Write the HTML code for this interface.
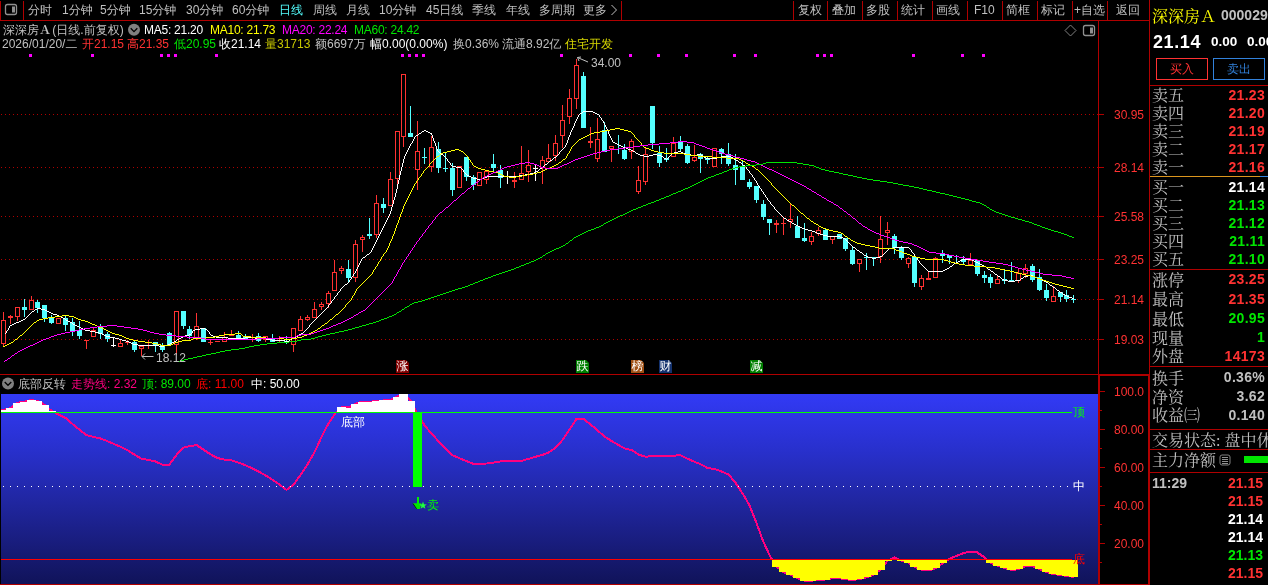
<!DOCTYPE html>
<html lang="zh-CN"><head><meta charset="utf-8"><title>深深房A 日线</title>
<style>
html,body{margin:0;padding:0;background:#000;}
body{width:1268px;height:585px;position:relative;overflow:hidden;font-family:"Liberation Sans","WenQuanYi Zen Hei","Noto Sans CJK SC",sans-serif;color:#C0C0C0;}
svg{position:absolute;left:0;top:0;}
#txt{position:absolute;left:0;top:0;width:1268px;height:585px;will-change:transform;}
.t{position:absolute;white-space:nowrap;}
.tb{line-height:12px;font-size:12px;color:#C0C0C0;}
.h{line-height:12px;font-size:12px;color:#C0C0C0;}
.sa{font-family:"Noto Serif CJK SC",serif;font-weight:bold;font-size:12px;}
.sa2{font-family:"Noto Serif CJK SC",serif;font-size:16px;}
.big{line-height:16px;margin-top:1px;font-family:"Liberation Serif","Noto Serif CJK SC",serif;font-size:16px;color:#C0C0C0;font-weight:400;}
.par{letter-spacing:-4px;margin-left:-4px;}
.code{line-height:14px;font-size:14px;font-weight:bold;color:#C0C0C0;}
.price{line-height:18px;font-size:18px;font-weight:bold;color:#fff;letter-spacing:0.6px;}
.chg{line-height:14px;font-size:13.5px;font-weight:bold;color:#fff;}
.val{line-height:14px;font-size:14px;font-weight:bold;}
.btn{position:absolute;height:22px;border:1px solid;box-sizing:border-box;width:52px;text-align:center;font-size:12px;line-height:20px;}
.mk{clip-path:polygon(0 0,10px 0,13px 3px,13px 13px,0 13px);position:absolute;width:13px;height:13px;color:#fff;font-size:12px;line-height:13px;text-align:center;overflow:hidden;}
</style></head><body>
<svg width="1268" height="585" viewBox="0 0 1268 585" shape-rendering="crispEdges">
<defs><linearGradient id="bg" x1="0" y1="0" x2="0" y2="1"><stop offset="0" stop-color="#323AF5"/><stop offset="0.3" stop-color="#2830CC"/><stop offset="0.57" stop-color="#2026A0"/><stop offset="0.96" stop-color="#121560"/><stop offset="1" stop-color="#10135A"/></linearGradient></defs>
<rect x="1" y="394" width="1097" height="190" fill="url(#bg)" />
<rect x="0" y="20" width="1150" height="1" fill="#B00000" />
<rect x="0" y="1" width="1" height="20" fill="#B00000" />
<rect x="23" y="1" width="1" height="20" fill="#B00000" />
<rect x="621" y="1" width="1" height="20" fill="#B00000" />
<rect x="793" y="1" width="1" height="20" fill="#B00000" />
<rect x="827" y="1" width="1" height="20" fill="#B00000" />
<rect x="862" y="1" width="1" height="20" fill="#B00000" />
<rect x="897" y="1" width="1" height="20" fill="#B00000" />
<rect x="932" y="1" width="1" height="20" fill="#B00000" />
<rect x="967" y="1" width="1" height="20" fill="#B00000" />
<rect x="1002" y="1" width="1" height="20" fill="#B00000" />
<rect x="1037" y="1" width="1" height="20" fill="#B00000" />
<rect x="1072" y="1" width="1" height="20" fill="#B00000" />
<rect x="1107" y="1" width="1" height="20" fill="#B00000" />
<rect x="1098" y="21" width="1" height="564" fill="#B00000" />
<rect x="1149" y="0" width="1" height="585" fill="#B00000" />
<rect x="0" y="374" width="1098" height="1" fill="#B00000" />
<rect x="1098" y="374" width="52" height="2" fill="#B00000" />
<rect x="1099" y="374" width="1" height="211" fill="#B00000" />
<rect x="1148" y="374" width="1" height="211" fill="#B00000" />
<rect x="0" y="584" width="1150" height="1" fill="#B00000" />
<line x1="1" y1="114.5" x2="1098" y2="114.5" stroke="#B00000" stroke-width="1" stroke-dasharray="1 3"/>
<rect x="1099" y="114" width="5" height="1" fill="#B00000" />
<line x1="1" y1="167.5" x2="1098" y2="167.5" stroke="#B00000" stroke-width="1" stroke-dasharray="1 3"/>
<rect x="1099" y="167" width="5" height="1" fill="#B00000" />
<line x1="1" y1="216.5" x2="1098" y2="216.5" stroke="#B00000" stroke-width="1" stroke-dasharray="1 3"/>
<rect x="1099" y="216" width="5" height="1" fill="#B00000" />
<line x1="1" y1="259.5" x2="1098" y2="259.5" stroke="#B00000" stroke-width="1" stroke-dasharray="1 3"/>
<rect x="1099" y="259" width="5" height="1" fill="#B00000" />
<line x1="1" y1="299.5" x2="1098" y2="299.5" stroke="#B00000" stroke-width="1" stroke-dasharray="1 3"/>
<rect x="1099" y="299" width="5" height="1" fill="#B00000" />
<line x1="1" y1="339.5" x2="1098" y2="339.5" stroke="#B00000" stroke-width="1" stroke-dasharray="1 3"/>
<rect x="1099" y="339" width="5" height="1" fill="#B00000" />
<rect x="29" y="54" width="3" height="3" fill="#FF00FF" />
<rect x="91" y="54" width="3" height="3" fill="#FF00FF" />
<rect x="160" y="54" width="3" height="3" fill="#FF00FF" />
<rect x="167" y="54" width="3" height="3" fill="#FF00FF" />
<rect x="174" y="54" width="3" height="3" fill="#FF00FF" />
<rect x="215" y="54" width="3" height="3" fill="#FF00FF" />
<rect x="401" y="54" width="3" height="3" fill="#FF00FF" />
<rect x="408" y="54" width="3" height="3" fill="#FF00FF" />
<rect x="415" y="54" width="3" height="3" fill="#FF00FF" />
<rect x="422" y="54" width="3" height="3" fill="#FF00FF" />
<rect x="560" y="54" width="3" height="3" fill="#FF00FF" />
<rect x="629" y="54" width="3" height="3" fill="#FF00FF" />
<rect x="657" y="54" width="3" height="3" fill="#FF00FF" />
<rect x="685" y="54" width="3" height="3" fill="#FF00FF" />
<rect x="733" y="54" width="3" height="3" fill="#FF00FF" />
<rect x="754" y="54" width="3" height="3" fill="#FF00FF" />
<rect x="816" y="54" width="3" height="3" fill="#FF00FF" />
<rect x="823" y="54" width="3" height="3" fill="#FF00FF" />
<rect x="830" y="54" width="3" height="3" fill="#FF00FF" />
<rect x="912" y="54" width="3" height="3" fill="#FF00FF" />
<rect x="961" y="54" width="3" height="3" fill="#FF00FF" />
<rect x="982" y="54" width="3" height="3" fill="#FF00FF" />
<rect x="3" y="312" width="1" height="8" fill="#FF3232" />
<rect x="3" y="344" width="1" height="3" fill="#FF3232" />
<rect x="1.5" y="320.5" width="4" height="23" fill="#000" stroke="#FF3232" stroke-width="1"/>
<rect x="10" y="315" width="1" height="9" fill="#FF3232" />
<rect x="8" y="316" width="5" height="2" fill="#FF3232" />
<rect x="17" y="317" width="1" height="4" fill="#FF3232" />
<rect x="15.5" y="307.5" width="4" height="9" fill="#000" stroke="#FF3232" stroke-width="1"/>
<rect x="24" y="299" width="1" height="18" fill="#54FFFF" />
<rect x="22" y="307" width="5" height="3" fill="#54FFFF" />
<rect x="31" y="296" width="1" height="4" fill="#FF3232" />
<rect x="29.5" y="300.5" width="4" height="9" fill="#000" stroke="#FF3232" stroke-width="1"/>
<rect x="37" y="300" width="1" height="13" fill="#54FFFF" />
<rect x="35" y="302" width="5" height="6" fill="#54FFFF" />
<rect x="44" y="305" width="1" height="17" fill="#54FFFF" />
<rect x="42" y="305" width="5" height="13" fill="#54FFFF" />
<rect x="51" y="315" width="1" height="9" fill="#54FFFF" />
<rect x="49" y="318" width="5" height="5" fill="#54FFFF" />
<rect x="56.5" y="318.5" width="4" height="5" fill="#000" stroke="#FF3232" stroke-width="1"/>
<rect x="65" y="316" width="1" height="15" fill="#54FFFF" />
<rect x="63" y="318" width="5" height="7" fill="#54FFFF" />
<rect x="72" y="318" width="1" height="18" fill="#54FFFF" />
<rect x="70" y="322" width="5" height="10" fill="#54FFFF" />
<rect x="79" y="321" width="1" height="18" fill="#54FFFF" />
<rect x="77" y="330" width="5" height="6" fill="#54FFFF" />
<rect x="86" y="340" width="1" height="9" fill="#FF3232" />
<rect x="84" y="340" width="5" height="1" fill="#FF3232" />
<rect x="93" y="328" width="1" height="2" fill="#FF3232" />
<rect x="91.5" y="330.5" width="4" height="6" fill="#000" stroke="#FF3232" stroke-width="1"/>
<rect x="100" y="324" width="1" height="15" fill="#54FFFF" />
<rect x="98" y="327" width="5" height="7" fill="#54FFFF" />
<rect x="107" y="332" width="1" height="10" fill="#54FFFF" />
<rect x="105" y="334" width="5" height="5" fill="#54FFFF" />
<rect x="113" y="338" width="1" height="9" fill="#FFFFFF" />
<rect x="111" y="345" width="5" height="1" fill="#FFFFFF" />
<rect x="120" y="339" width="1" height="4" fill="#FF3232" />
<rect x="118.5" y="343.5" width="4" height="3" fill="#000" stroke="#FF3232" stroke-width="1"/>
<rect x="127" y="340" width="1" height="5" fill="#FF3232" />
<rect x="125" y="342" width="5" height="1" fill="#FF3232" />
<rect x="134" y="341" width="1" height="11" fill="#54FFFF" />
<rect x="132" y="342" width="5" height="8" fill="#54FFFF" />
<rect x="141" y="349" width="1" height="7" fill="#FF3232" />
<rect x="139.5" y="346.5" width="4" height="2" fill="#000" stroke="#FF3232" stroke-width="1"/>
<rect x="148" y="340" width="1" height="9" fill="#FF3232" />
<rect x="146" y="345" width="5" height="1" fill="#FF3232" />
<rect x="155" y="342" width="1" height="10" fill="#54FFFF" />
<rect x="153" y="342" width="5" height="4" fill="#54FFFF" />
<rect x="162" y="343" width="1" height="9" fill="#54FFFF" />
<rect x="160" y="345" width="5" height="5" fill="#54FFFF" />
<rect x="169" y="332" width="1" height="13" fill="#54FFFF" />
<rect x="167" y="333" width="5" height="12" fill="#54FFFF" />
<rect x="176" y="345" width="1" height="10" fill="#FF3232" />
<rect x="174.5" y="311.5" width="4" height="33" fill="#000" stroke="#FF3232" stroke-width="1"/>
<rect x="183" y="311" width="1" height="18" fill="#54FFFF" />
<rect x="181" y="311" width="5" height="15" fill="#54FFFF" />
<rect x="189" y="326" width="1" height="13" fill="#54FFFF" />
<rect x="187" y="329" width="5" height="7" fill="#54FFFF" />
<rect x="196" y="313" width="1" height="13" fill="#FF3232" />
<rect x="196" y="338" width="1" height="2" fill="#FF3232" />
<rect x="194.5" y="326.5" width="4" height="11" fill="#000" stroke="#FF3232" stroke-width="1"/>
<rect x="203" y="328" width="1" height="14" fill="#54FFFF" />
<rect x="201" y="328" width="5" height="14" fill="#54FFFF" />
<rect x="210" y="340" width="1" height="5" fill="#FF3232" />
<rect x="208" y="342" width="5" height="1" fill="#FF3232" />
<rect x="217" y="341" width="1" height="1" fill="#FF3232" />
<rect x="215" y="341" width="5" height="1" fill="#FF3232" />
<rect x="224" y="332" width="1" height="5" fill="#FF3232" />
<rect x="222.5" y="337.5" width="4" height="4" fill="#000" stroke="#FF3232" stroke-width="1"/>
<rect x="231" y="330" width="1" height="6" fill="#FF3232" />
<rect x="229" y="335" width="5" height="1" fill="#FF3232" />
<rect x="238" y="331" width="1" height="9" fill="#54FFFF" />
<rect x="236" y="335" width="5" height="4" fill="#54FFFF" />
<rect x="245" y="334" width="1" height="5" fill="#54FFFF" />
<rect x="243" y="337" width="5" height="2" fill="#54FFFF" />
<rect x="252" y="334" width="1" height="8" fill="#FF3232" />
<rect x="250" y="337" width="5" height="1" fill="#FF3232" />
<rect x="258" y="333" width="1" height="9" fill="#54FFFF" />
<rect x="256" y="336" width="5" height="5" fill="#54FFFF" />
<rect x="265" y="340" width="1" height="2" fill="#FF3232" />
<rect x="263.5" y="336.5" width="4" height="3" fill="#000" stroke="#FF3232" stroke-width="1"/>
<rect x="272" y="334" width="1" height="8" fill="#54FFFF" />
<rect x="270" y="338" width="5" height="4" fill="#54FFFF" />
<rect x="279" y="336" width="1" height="7" fill="#FF3232" />
<rect x="277" y="342" width="5" height="1" fill="#FF3232" />
<rect x="286" y="336" width="1" height="8" fill="#54FFFF" />
<rect x="284" y="341" width="5" height="1" fill="#54FFFF" />
<rect x="293" y="345" width="1" height="7" fill="#FF3232" />
<rect x="291.5" y="328.5" width="4" height="16" fill="#000" stroke="#FF3232" stroke-width="1"/>
<rect x="300" y="316" width="1" height="3" fill="#FF3232" />
<rect x="298.5" y="319.5" width="4" height="11" fill="#000" stroke="#FF3232" stroke-width="1"/>
<rect x="307" y="315" width="1" height="2" fill="#FF3232" />
<rect x="307" y="320" width="1" height="1" fill="#FF3232" />
<rect x="305.5" y="317.5" width="4" height="2" fill="#000" stroke="#FF3232" stroke-width="1"/>
<rect x="314" y="302" width="1" height="7" fill="#FF3232" />
<rect x="312.5" y="309.5" width="4" height="8" fill="#000" stroke="#FF3232" stroke-width="1"/>
<rect x="321" y="302" width="1" height="2" fill="#FF3232" />
<rect x="321" y="307" width="1" height="3" fill="#FF3232" />
<rect x="319.5" y="304.5" width="4" height="2" fill="#000" stroke="#FF3232" stroke-width="1"/>
<rect x="328" y="291" width="1" height="2" fill="#FF3232" />
<rect x="328" y="304" width="1" height="4" fill="#FF3232" />
<rect x="326.5" y="293.5" width="4" height="10" fill="#000" stroke="#FF3232" stroke-width="1"/>
<rect x="334" y="260" width="1" height="12" fill="#FF3232" />
<rect x="332.5" y="272.5" width="4" height="18" fill="#000" stroke="#FF3232" stroke-width="1"/>
<rect x="341" y="266" width="1" height="2" fill="#FF3232" />
<rect x="341" y="271" width="1" height="3" fill="#FF3232" />
<rect x="339.5" y="268.5" width="4" height="2" fill="#000" stroke="#FF3232" stroke-width="1"/>
<rect x="348" y="260" width="1" height="23" fill="#54FFFF" />
<rect x="346" y="269" width="5" height="9" fill="#54FFFF" />
<rect x="355" y="240" width="1" height="4" fill="#FF3232" />
<rect x="355" y="278" width="1" height="4" fill="#FF3232" />
<rect x="353.5" y="244.5" width="4" height="33" fill="#000" stroke="#FF3232" stroke-width="1"/>
<rect x="362" y="235" width="1" height="2" fill="#FF3232" />
<rect x="362" y="240" width="1" height="12" fill="#FF3232" />
<rect x="360.5" y="237.5" width="4" height="2" fill="#000" stroke="#FF3232" stroke-width="1"/>
<rect x="369" y="218" width="1" height="21" fill="#54FFFF" />
<rect x="367" y="234" width="5" height="2" fill="#54FFFF" />
<rect x="376" y="195" width="1" height="8" fill="#FF3232" />
<rect x="376" y="235" width="1" height="3" fill="#FF3232" />
<rect x="374.5" y="203.5" width="4" height="31" fill="#000" stroke="#FF3232" stroke-width="1"/>
<rect x="383" y="198" width="1" height="15" fill="#54FFFF" />
<rect x="381" y="204" width="5" height="4" fill="#54FFFF" />
<rect x="390" y="172" width="1" height="7" fill="#FF3232" />
<rect x="388.5" y="179.5" width="4" height="26" fill="#000" stroke="#FF3232" stroke-width="1"/>
<rect x="397" y="179" width="1" height="9" fill="#FF3232" />
<rect x="395.5" y="131.5" width="4" height="47" fill="#000" stroke="#FF3232" stroke-width="1"/>
<rect x="403" y="137" width="1" height="10" fill="#FF3232" />
<rect x="401.5" y="74.5" width="4" height="62" fill="#000" stroke="#FF3232" stroke-width="1"/>
<rect x="410" y="106" width="1" height="31" fill="#54FFFF" />
<rect x="408" y="133" width="5" height="4" fill="#54FFFF" />
<rect x="417" y="121" width="1" height="30" fill="#FF3232" />
<rect x="417" y="170" width="1" height="20" fill="#FF3232" />
<rect x="415.5" y="151.5" width="4" height="18" fill="#000" stroke="#FF3232" stroke-width="1"/>
<rect x="424" y="148" width="1" height="16" fill="#54FFFF" />
<rect x="422" y="157" width="5" height="1" fill="#54FFFF" />
<rect x="431" y="136" width="1" height="11" fill="#FF3232" />
<rect x="431" y="167" width="1" height="5" fill="#FF3232" />
<rect x="429.5" y="147.5" width="4" height="19" fill="#000" stroke="#FF3232" stroke-width="1"/>
<rect x="438" y="142" width="1" height="31" fill="#54FFFF" />
<rect x="436" y="149" width="5" height="19" fill="#54FFFF" />
<rect x="445" y="152" width="1" height="20" fill="#54FFFF" />
<rect x="443" y="168" width="5" height="1" fill="#54FFFF" />
<rect x="452" y="163" width="1" height="33" fill="#54FFFF" />
<rect x="450" y="168" width="5" height="22" fill="#54FFFF" />
<rect x="457.5" y="166.5" width="4" height="21" fill="#000" stroke="#FF3232" stroke-width="1"/>
<rect x="466" y="157" width="1" height="24" fill="#54FFFF" />
<rect x="464" y="157" width="5" height="20" fill="#54FFFF" />
<rect x="473" y="175" width="1" height="15" fill="#54FFFF" />
<rect x="471" y="177" width="5" height="8" fill="#54FFFF" />
<rect x="477.5" y="172.5" width="4" height="13" fill="#000" stroke="#FF3232" stroke-width="1"/>
<rect x="486" y="180" width="1" height="4" fill="#FF3232" />
<rect x="484.5" y="171.5" width="4" height="8" fill="#000" stroke="#FF3232" stroke-width="1"/>
<rect x="493" y="154" width="1" height="18" fill="#54FFFF" />
<rect x="491" y="164" width="5" height="4" fill="#54FFFF" />
<rect x="500" y="165" width="1" height="23" fill="#54FFFF" />
<rect x="498" y="170" width="5" height="8" fill="#54FFFF" />
<rect x="507" y="171" width="1" height="13" fill="#FFFFFF" />
<rect x="505" y="176" width="5" height="1" fill="#FFFFFF" />
<rect x="514" y="172" width="1" height="16" fill="#FF3232" />
<rect x="512" y="180" width="5" height="2" fill="#FF3232" />
<rect x="521" y="146" width="1" height="27" fill="#FF3232" />
<rect x="519.5" y="173.5" width="4" height="6" fill="#000" stroke="#FF3232" stroke-width="1"/>
<rect x="528" y="150" width="1" height="15" fill="#FF3232" />
<rect x="528" y="172" width="1" height="10" fill="#FF3232" />
<rect x="526.5" y="165.5" width="4" height="6" fill="#000" stroke="#FF3232" stroke-width="1"/>
<rect x="535" y="165" width="1" height="16" fill="#FFFFFF" />
<rect x="533" y="168" width="5" height="1" fill="#FFFFFF" />
<rect x="542" y="156" width="1" height="4" fill="#FF3232" />
<rect x="542" y="168" width="1" height="16" fill="#FF3232" />
<rect x="540.5" y="160.5" width="4" height="7" fill="#000" stroke="#FF3232" stroke-width="1"/>
<rect x="548" y="144" width="1" height="14" fill="#FF3232" />
<rect x="548" y="162" width="1" height="1" fill="#FF3232" />
<rect x="546.5" y="158.5" width="4" height="3" fill="#000" stroke="#FF3232" stroke-width="1"/>
<rect x="555" y="135" width="1" height="8" fill="#FF3232" />
<rect x="555" y="156" width="1" height="5" fill="#FF3232" />
<rect x="553.5" y="143.5" width="4" height="12" fill="#000" stroke="#FF3232" stroke-width="1"/>
<rect x="562" y="105" width="1" height="15" fill="#FF3232" />
<rect x="562" y="136" width="1" height="12" fill="#FF3232" />
<rect x="560.5" y="120.5" width="4" height="15" fill="#000" stroke="#FF3232" stroke-width="1"/>
<rect x="569" y="89" width="1" height="9" fill="#FF3232" />
<rect x="569" y="117" width="1" height="7" fill="#FF3232" />
<rect x="567.5" y="98.5" width="4" height="18" fill="#000" stroke="#FF3232" stroke-width="1"/>
<rect x="576" y="59" width="1" height="6" fill="#FF3232" />
<rect x="576" y="99" width="1" height="10" fill="#FF3232" />
<rect x="574.5" y="65.5" width="4" height="33" fill="#000" stroke="#FF3232" stroke-width="1"/>
<rect x="583" y="72" width="1" height="56" fill="#54FFFF" />
<rect x="581" y="76" width="5" height="52" fill="#54FFFF" />
<rect x="590" y="127" width="1" height="21" fill="#FF3232" />
<rect x="588" y="141" width="5" height="2" fill="#FF3232" />
<rect x="597" y="118" width="1" height="21" fill="#FF3232" />
<rect x="597" y="159" width="1" height="3" fill="#FF3232" />
<rect x="595.5" y="139.5" width="4" height="19" fill="#000" stroke="#FF3232" stroke-width="1"/>
<rect x="604" y="122" width="1" height="30" fill="#54FFFF" />
<rect x="602" y="130" width="5" height="22" fill="#54FFFF" />
<rect x="611" y="149" width="1" height="13" fill="#FF3232" />
<rect x="609.5" y="146.5" width="4" height="2" fill="#000" stroke="#FF3232" stroke-width="1"/>
<rect x="618" y="135" width="1" height="19" fill="#54FFFF" />
<rect x="624" y="144" width="1" height="16" fill="#54FFFF" />
<rect x="622" y="150" width="5" height="9" fill="#54FFFF" />
<rect x="631" y="139" width="1" height="2" fill="#FF3232" />
<rect x="631" y="152" width="1" height="7" fill="#FF3232" />
<rect x="629.5" y="141.5" width="4" height="10" fill="#000" stroke="#FF3232" stroke-width="1"/>
<rect x="638" y="166" width="1" height="14" fill="#FF3232" />
<rect x="638" y="192" width="1" height="2" fill="#FF3232" />
<rect x="636.5" y="180.5" width="4" height="11" fill="#000" stroke="#FF3232" stroke-width="1"/>
<rect x="645" y="148" width="1" height="6" fill="#FF3232" />
<rect x="645" y="182" width="1" height="3" fill="#FF3232" />
<rect x="643.5" y="154.5" width="4" height="27" fill="#000" stroke="#FF3232" stroke-width="1"/>
<rect x="652" y="106" width="1" height="43" fill="#54FFFF" />
<rect x="650" y="106" width="5" height="37" fill="#54FFFF" />
<rect x="659" y="146" width="1" height="21" fill="#54FFFF" />
<rect x="657" y="153" width="5" height="10" fill="#54FFFF" />
<rect x="666" y="148" width="1" height="14" fill="#54FFFF" />
<rect x="664" y="158" width="5" height="2" fill="#54FFFF" />
<rect x="673" y="137" width="1" height="6" fill="#FF3232" />
<rect x="671.5" y="143.5" width="4" height="13" fill="#000" stroke="#FF3232" stroke-width="1"/>
<rect x="680" y="136" width="1" height="16" fill="#54FFFF" />
<rect x="678" y="141" width="5" height="8" fill="#54FFFF" />
<rect x="687" y="144" width="1" height="20" fill="#54FFFF" />
<rect x="685" y="146" width="5" height="17" fill="#54FFFF" />
<rect x="694" y="145" width="1" height="12" fill="#FF3232" />
<rect x="694" y="161" width="1" height="1" fill="#FF3232" />
<rect x="692.5" y="157.5" width="4" height="3" fill="#000" stroke="#FF3232" stroke-width="1"/>
<rect x="700" y="153" width="1" height="20" fill="#54FFFF" />
<rect x="698" y="154" width="5" height="5" fill="#54FFFF" />
<rect x="707" y="156" width="1" height="8" fill="#54FFFF" />
<rect x="705" y="158" width="5" height="2" fill="#54FFFF" />
<rect x="712.5" y="148.5" width="4" height="18" fill="#000" stroke="#FF3232" stroke-width="1"/>
<rect x="721" y="148" width="1" height="16" fill="#54FFFF" />
<rect x="719" y="149" width="5" height="5" fill="#54FFFF" />
<rect x="728" y="143" width="1" height="23" fill="#54FFFF" />
<rect x="726" y="154" width="5" height="10" fill="#54FFFF" />
<rect x="735" y="154" width="1" height="31" fill="#54FFFF" />
<rect x="733" y="165" width="5" height="5" fill="#54FFFF" />
<rect x="742" y="161" width="1" height="19" fill="#54FFFF" />
<rect x="740" y="167" width="5" height="13" fill="#54FFFF" />
<rect x="749" y="179" width="1" height="10" fill="#54FFFF" />
<rect x="747" y="182" width="5" height="5" fill="#54FFFF" />
<rect x="756" y="186" width="1" height="17" fill="#54FFFF" />
<rect x="754" y="186" width="5" height="14" fill="#54FFFF" />
<rect x="763" y="200" width="1" height="20" fill="#54FFFF" />
<rect x="761" y="204" width="5" height="13" fill="#54FFFF" />
<rect x="769" y="219" width="1" height="16" fill="#54FFFF" />
<rect x="767" y="219" width="5" height="4" fill="#54FFFF" />
<rect x="776" y="220" width="1" height="13" fill="#FF3232" />
<rect x="774" y="223" width="5" height="2" fill="#FF3232" />
<rect x="783" y="218" width="1" height="17" fill="#FF3232" />
<rect x="781" y="223" width="5" height="1" fill="#FF3232" />
<rect x="790" y="204" width="1" height="15" fill="#FF3232" />
<rect x="790" y="222" width="1" height="6" fill="#FF3232" />
<rect x="788.5" y="219.5" width="4" height="2" fill="#000" stroke="#FF3232" stroke-width="1"/>
<rect x="797" y="216" width="1" height="22" fill="#54FFFF" />
<rect x="795" y="226" width="5" height="12" fill="#54FFFF" />
<rect x="804" y="223" width="1" height="19" fill="#54FFFF" />
<rect x="802" y="238" width="5" height="3" fill="#54FFFF" />
<rect x="811" y="232" width="1" height="4" fill="#FF3232" />
<rect x="811" y="242" width="1" height="3" fill="#FF3232" />
<rect x="809.5" y="236.5" width="4" height="5" fill="#000" stroke="#FF3232" stroke-width="1"/>
<rect x="818" y="227" width="1" height="3" fill="#FF3232" />
<rect x="818" y="234" width="1" height="2" fill="#FF3232" />
<rect x="816.5" y="230.5" width="4" height="3" fill="#000" stroke="#FF3232" stroke-width="1"/>
<rect x="825" y="228" width="1" height="12" fill="#54FFFF" />
<rect x="823" y="230" width="5" height="10" fill="#54FFFF" />
<rect x="832" y="240" width="1" height="4" fill="#FF3232" />
<rect x="830.5" y="236.5" width="4" height="3" fill="#000" stroke="#FF3232" stroke-width="1"/>
<rect x="839" y="234" width="1" height="5" fill="#54FFFF" />
<rect x="837" y="234" width="5" height="5" fill="#54FFFF" />
<rect x="845" y="238" width="1" height="13" fill="#54FFFF" />
<rect x="843" y="238" width="5" height="11" fill="#54FFFF" />
<rect x="852" y="246" width="1" height="19" fill="#54FFFF" />
<rect x="850" y="250" width="5" height="14" fill="#54FFFF" />
<rect x="859" y="264" width="1" height="8" fill="#FF3232" />
<rect x="857.5" y="259.5" width="4" height="4" fill="#000" stroke="#FF3232" stroke-width="1"/>
<rect x="866" y="253" width="1" height="17" fill="#54FFFF" />
<rect x="864" y="257" width="5" height="1" fill="#54FFFF" />
<rect x="873" y="257" width="1" height="9" fill="#54FFFF" />
<rect x="871" y="257" width="5" height="1" fill="#54FFFF" />
<rect x="880" y="216" width="1" height="23" fill="#FF3232" />
<rect x="880" y="257" width="1" height="6" fill="#FF3232" />
<rect x="878.5" y="239.5" width="4" height="17" fill="#000" stroke="#FF3232" stroke-width="1"/>
<rect x="887" y="222" width="1" height="8" fill="#FF3232" />
<rect x="887" y="233" width="1" height="12" fill="#FF3232" />
<rect x="885.5" y="230.5" width="4" height="2" fill="#000" stroke="#FF3232" stroke-width="1"/>
<rect x="894" y="234" width="1" height="20" fill="#54FFFF" />
<rect x="892" y="236" width="5" height="12" fill="#54FFFF" />
<rect x="901" y="246" width="1" height="14" fill="#54FFFF" />
<rect x="899" y="248" width="5" height="10" fill="#54FFFF" />
<rect x="908" y="257" width="1" height="1" fill="#FF3232" />
<rect x="908" y="264" width="1" height="4" fill="#FF3232" />
<rect x="906.5" y="258.5" width="4" height="5" fill="#000" stroke="#FF3232" stroke-width="1"/>
<rect x="914" y="257" width="1" height="30" fill="#54FFFF" />
<rect x="912" y="257" width="5" height="26" fill="#54FFFF" />
<rect x="921" y="275" width="1" height="3" fill="#FF3232" />
<rect x="921" y="287" width="1" height="3" fill="#FF3232" />
<rect x="919.5" y="278.5" width="4" height="8" fill="#000" stroke="#FF3232" stroke-width="1"/>
<rect x="928" y="271" width="1" height="9" fill="#FF3232" />
<rect x="926" y="278" width="5" height="2" fill="#FF3232" />
<rect x="935" y="257" width="1" height="1" fill="#FF3232" />
<rect x="933.5" y="258.5" width="4" height="19" fill="#000" stroke="#FF3232" stroke-width="1"/>
<rect x="942" y="250" width="1" height="13" fill="#54FFFF" />
<rect x="940" y="254" width="5" height="2" fill="#54FFFF" />
<rect x="949" y="255" width="1" height="9" fill="#54FFFF" />
<rect x="947" y="255" width="5" height="3" fill="#54FFFF" />
<rect x="956" y="255" width="1" height="9" fill="#54FFFF" />
<rect x="954" y="256" width="5" height="1" fill="#54FFFF" />
<rect x="963" y="256" width="1" height="8" fill="#54FFFF" />
<rect x="961" y="259" width="5" height="3" fill="#54FFFF" />
<rect x="970" y="253" width="1" height="7" fill="#FF3232" />
<rect x="968.5" y="260.5" width="4" height="4" fill="#000" stroke="#FF3232" stroke-width="1"/>
<rect x="977" y="260" width="1" height="16" fill="#54FFFF" />
<rect x="975" y="260" width="5" height="14" fill="#54FFFF" />
<rect x="984" y="271" width="1" height="12" fill="#54FFFF" />
<rect x="982" y="275" width="5" height="3" fill="#54FFFF" />
<rect x="990" y="274" width="1" height="14" fill="#54FFFF" />
<rect x="988" y="277" width="5" height="6" fill="#54FFFF" />
<rect x="997" y="275" width="1" height="4" fill="#FF3232" />
<rect x="995.5" y="279.5" width="4" height="4" fill="#000" stroke="#FF3232" stroke-width="1"/>
<rect x="1004" y="269" width="1" height="15" fill="#54FFFF" />
<rect x="1002" y="279" width="5" height="2" fill="#54FFFF" />
<rect x="1011" y="262" width="1" height="20" fill="#54FFFF" />
<rect x="1009" y="280" width="5" height="2" fill="#54FFFF" />
<rect x="1018" y="268" width="1" height="5" fill="#FF3232" />
<rect x="1018" y="281" width="1" height="2" fill="#FF3232" />
<rect x="1016.5" y="273.5" width="4" height="7" fill="#000" stroke="#FF3232" stroke-width="1"/>
<rect x="1025" y="264" width="1" height="4" fill="#FF3232" />
<rect x="1025" y="274" width="1" height="4" fill="#FF3232" />
<rect x="1023.5" y="268.5" width="4" height="5" fill="#000" stroke="#FF3232" stroke-width="1"/>
<rect x="1032" y="264" width="1" height="18" fill="#54FFFF" />
<rect x="1030" y="266" width="5" height="14" fill="#54FFFF" />
<rect x="1039" y="269" width="1" height="22" fill="#54FFFF" />
<rect x="1037" y="277" width="5" height="13" fill="#54FFFF" />
<rect x="1046" y="284" width="1" height="17" fill="#54FFFF" />
<rect x="1044" y="290" width="5" height="8" fill="#54FFFF" />
<rect x="1053" y="286" width="1" height="10" fill="#FF3232" />
<rect x="1051.5" y="296.5" width="4" height="5" fill="#000" stroke="#FF3232" stroke-width="1"/>
<rect x="1060" y="292" width="1" height="10" fill="#54FFFF" />
<rect x="1058" y="292" width="5" height="5" fill="#54FFFF" />
<rect x="1066" y="290" width="1" height="12" fill="#54FFFF" />
<rect x="1064" y="295" width="5" height="4" fill="#54FFFF" />
<rect x="1073" y="295" width="1" height="8" fill="#54FFFF" />
<rect x="1071" y="299" width="5" height="1" fill="#54FFFF" />
<path d="M583 111.5h10M582 112.5h1M593 112.5h2M580 113.5h2M595 113.5h2M579 114.5h1M597 114.5h2M578 115.5h1M599 115.5h1M578 116.5h1M599 116.5h1M577 117.5h1M600 117.5h1M577 118.5h1M601 118.5h1M576 119.5h1M601 119.5h1M576 120.5h1M602 120.5h1M575 121.5h1M603 121.5h1M575 122.5h1M603 122.5h1M574 123.5h1M604 123.5h1M574 124.5h1M604 124.5h1M574 125.5h1M605 125.5h1M573 126.5h1M605 126.5h1M573 127.5h1M606 127.5h1M572 128.5h1M606 128.5h1M572 129.5h1M607 129.5h1M424 130.5h2M571 130.5h1M607 130.5h1M422 131.5h2M426 131.5h2M571 131.5h1M608 131.5h1M421 132.5h1M428 132.5h2M570 132.5h1M608 132.5h1M419 133.5h2M430 133.5h2M570 133.5h1M608 133.5h1M418 134.5h1M431 134.5h1M570 134.5h1M609 134.5h1M416 135.5h2M432 135.5h1M569 135.5h1M609 135.5h1M415 136.5h1M432 136.5h1M569 136.5h1M610 136.5h1M414 137.5h1M432 137.5h1M568 137.5h1M610 137.5h1M414 138.5h1M433 138.5h1M568 138.5h1M611 138.5h1M413 139.5h1M433 139.5h1M568 139.5h1M611 139.5h1M413 140.5h1M433 140.5h1M567 140.5h1M612 140.5h1M412 141.5h1M434 141.5h1M567 141.5h1M612 141.5h1M412 142.5h1M434 142.5h1M567 142.5h1M613 142.5h2M411 143.5h1M435 143.5h1M566 143.5h1M615 143.5h2M410 144.5h1M435 144.5h1M566 144.5h1M617 144.5h2M410 145.5h1M435 145.5h1M565 145.5h1M619 145.5h2M409 146.5h1M436 146.5h1M565 146.5h1M621 146.5h2M409 147.5h1M436 147.5h1M564 147.5h1M623 147.5h3M408 148.5h1M436 148.5h1M563 148.5h1M626 148.5h2M408 149.5h1M437 149.5h1M562 149.5h1M628 149.5h3M407 150.5h1M437 150.5h1M561 150.5h1M631 150.5h2M407 151.5h1M438 151.5h1M560 151.5h1M633 151.5h2M678 151.5h3M406 152.5h1M439 152.5h1M559 152.5h1M635 152.5h1M674 152.5h4M681 152.5h2M406 153.5h1M440 153.5h1M559 153.5h1M636 153.5h2M672 153.5h2M683 153.5h3M405 154.5h1M441 154.5h2M558 154.5h1M638 154.5h2M653 154.5h4M671 154.5h1M686 154.5h5M697 154.5h4M405 155.5h1M443 155.5h1M557 155.5h1M640 155.5h4M649 155.5h4M657 155.5h4M670 155.5h1M691 155.5h6M701 155.5h2M404 156.5h1M444 156.5h1M556 156.5h1M644 156.5h5M661 156.5h2M669 156.5h1M703 156.5h1M721 156.5h10M404 157.5h1M445 157.5h1M554 157.5h2M663 157.5h1M668 157.5h1M704 157.5h2M717 157.5h4M731 157.5h2M404 158.5h1M446 158.5h1M553 158.5h1M664 158.5h2M667 158.5h1M706 158.5h11M733 158.5h1M403 159.5h1M447 159.5h1M552 159.5h1M666 159.5h1M734 159.5h2M403 160.5h1M447 160.5h1M550 160.5h2M736 160.5h2M403 161.5h1M448 161.5h1M549 161.5h1M738 161.5h1M403 162.5h1M449 162.5h1M548 162.5h1M739 162.5h2M402 163.5h1M450 163.5h1M547 163.5h1M741 163.5h1M402 164.5h1M450 164.5h1M545 164.5h2M742 164.5h1M402 165.5h1M451 165.5h1M544 165.5h1M743 165.5h2M402 166.5h1M452 166.5h4M543 166.5h1M745 166.5h1M401 167.5h1M456 167.5h5M542 167.5h1M746 167.5h1M401 168.5h1M461 168.5h1M540 168.5h2M746 168.5h1M401 169.5h1M462 169.5h1M539 169.5h1M747 169.5h1M401 170.5h1M463 170.5h1M538 170.5h1M748 170.5h1M400 171.5h1M463 171.5h1M536 171.5h2M749 171.5h1M400 172.5h1M464 172.5h1M534 172.5h2M749 172.5h1M400 173.5h1M465 173.5h1M530 173.5h4M750 173.5h1M400 174.5h1M466 174.5h1M525 174.5h5M751 174.5h1M399 175.5h1M467 175.5h2M519 175.5h6M752 175.5h1M399 176.5h1M469 176.5h2M487 176.5h32M752 176.5h1M399 177.5h1M471 177.5h2M484 177.5h3M753 177.5h1M399 178.5h1M473 178.5h4M482 178.5h2M754 178.5h1M399 179.5h1M477 179.5h5M754 179.5h1M398 180.5h1M755 180.5h1M398 181.5h1M756 181.5h1M398 182.5h1M756 182.5h1M398 183.5h1M757 183.5h1M397 184.5h1M757 184.5h1M397 185.5h1M758 185.5h1M397 186.5h1M759 186.5h1M397 187.5h1M759 187.5h1M397 188.5h1M760 188.5h1M396 189.5h1M761 189.5h1M396 190.5h1M761 190.5h1M396 191.5h1M762 191.5h1M396 192.5h1M763 192.5h1M395 193.5h1M763 193.5h1M395 194.5h1M764 194.5h1M395 195.5h1M765 195.5h1M395 196.5h1M765 196.5h1M394 197.5h1M766 197.5h1M394 198.5h1M767 198.5h1M394 199.5h1M767 199.5h1M393 200.5h1M768 200.5h1M393 201.5h1M769 201.5h1M393 202.5h1M770 202.5h1M393 203.5h1M770 203.5h1M392 204.5h1M771 204.5h1M392 205.5h1M772 205.5h1M392 206.5h1M773 206.5h1M391 207.5h1M774 207.5h1M391 208.5h1M774 208.5h1M391 209.5h1M775 209.5h1M391 210.5h1M776 210.5h1M390 211.5h1M777 211.5h1M390 212.5h1M778 212.5h1M390 213.5h1M779 213.5h1M389 214.5h1M780 214.5h1M389 215.5h1M781 215.5h1M388 216.5h1M782 216.5h1M388 217.5h1M783 217.5h1M387 218.5h1M784 218.5h2M387 219.5h1M786 219.5h1M386 220.5h1M787 220.5h2M386 221.5h1M789 221.5h2M385 222.5h1M791 222.5h1M385 223.5h1M792 223.5h2M384 224.5h1M794 224.5h2M384 225.5h1M796 225.5h2M383 226.5h1M798 226.5h2M383 227.5h1M800 227.5h2M382 228.5h1M802 228.5h3M382 229.5h1M805 229.5h3M381 230.5h1M808 230.5h4M381 231.5h1M812 231.5h3M380 232.5h1M815 232.5h2M380 233.5h1M817 233.5h3M379 234.5h1M820 234.5h3M379 235.5h1M823 235.5h4M378 236.5h1M827 236.5h13M378 237.5h1M840 237.5h3M377 238.5h1M843 238.5h2M377 239.5h1M845 239.5h1M376 240.5h1M846 240.5h1M376 241.5h1M847 241.5h1M375 242.5h1M848 242.5h1M375 243.5h1M849 243.5h1M374 244.5h1M850 244.5h1M374 245.5h1M851 245.5h1M373 246.5h1M852 246.5h1M373 247.5h1M853 247.5h2M893 247.5h16M372 248.5h1M855 248.5h1M889 248.5h4M909 248.5h1M372 249.5h1M856 249.5h1M888 249.5h1M910 249.5h1M371 250.5h1M857 250.5h2M887 250.5h1M911 250.5h1M371 251.5h1M859 251.5h1M886 251.5h1M911 251.5h1M370 252.5h1M860 252.5h2M885 252.5h1M912 252.5h1M369 253.5h1M862 253.5h1M884 253.5h1M913 253.5h1M367 254.5h2M863 254.5h1M883 254.5h1M914 254.5h1M366 255.5h1M864 255.5h2M882 255.5h1M914 255.5h1M365 256.5h1M866 256.5h2M880 256.5h2M915 256.5h1M363 257.5h2M868 257.5h4M876 257.5h4M916 257.5h1M362 258.5h1M872 258.5h4M917 258.5h1M361 259.5h1M917 259.5h1M962 259.5h10M361 260.5h1M918 260.5h1M960 260.5h2M972 260.5h2M360 261.5h1M919 261.5h1M958 261.5h2M974 261.5h2M360 262.5h1M919 262.5h1M956 262.5h2M976 262.5h2M359 263.5h1M920 263.5h1M954 263.5h2M978 263.5h2M359 264.5h1M921 264.5h1M953 264.5h1M980 264.5h2M358 265.5h1M922 265.5h1M952 265.5h1M982 265.5h2M358 266.5h1M923 266.5h1M950 266.5h2M984 266.5h2M357 267.5h1M924 267.5h1M949 267.5h1M986 267.5h1M357 268.5h1M925 268.5h1M947 268.5h2M987 268.5h1M356 269.5h1M926 269.5h1M945 269.5h2M988 269.5h2M356 270.5h1M927 270.5h1M943 270.5h2M990 270.5h1M355 271.5h1M928 271.5h15M991 271.5h2M355 272.5h1M993 272.5h1M354 273.5h1M994 273.5h1M353 274.5h1M995 274.5h2M353 275.5h1M997 275.5h1M1028 275.5h5M352 276.5h1M998 276.5h2M1024 276.5h4M1033 276.5h2M351 277.5h1M1000 277.5h1M1023 277.5h1M1035 277.5h2M351 278.5h1M1001 278.5h1M1021 278.5h2M1037 278.5h3M350 279.5h1M1002 279.5h2M1020 279.5h1M1040 279.5h2M349 280.5h1M1004 280.5h4M1015 280.5h5M1042 280.5h2M349 281.5h1M1008 281.5h7M1044 281.5h2M348 282.5h1M1046 282.5h2M347 283.5h1M1048 283.5h1M345 284.5h2M1049 284.5h1M344 285.5h1M1050 285.5h2M343 286.5h1M1052 286.5h1M342 287.5h1M1053 287.5h2M341 288.5h1M1055 288.5h1M340 289.5h1M1056 289.5h1M340 290.5h1M1057 290.5h2M339 291.5h1M1059 291.5h1M338 292.5h1M1060 292.5h2M337 293.5h1M1062 293.5h1M337 294.5h1M1063 294.5h2M336 295.5h1M1065 295.5h2M335 296.5h1M1067 296.5h2M334 297.5h1M1069 297.5h3M334 298.5h1M1072 298.5h2M333 299.5h1M332 300.5h1M331 301.5h1M331 302.5h1M330 303.5h1M329 304.5h1M328 305.5h1M328 306.5h1M327 307.5h1M37 308.5h4M326 308.5h1M35 309.5h2M41 309.5h4M325 309.5h1M34 310.5h1M45 310.5h2M324 310.5h1M32 311.5h2M47 311.5h2M323 311.5h1M31 312.5h1M49 312.5h2M322 312.5h1M30 313.5h1M51 313.5h2M321 313.5h1M29 314.5h1M53 314.5h4M320 314.5h1M28 315.5h1M57 315.5h2M319 315.5h1M27 316.5h1M59 316.5h2M318 316.5h1M26 317.5h1M61 317.5h2M317 317.5h1M25 318.5h1M63 318.5h2M316 318.5h1M23 319.5h2M65 319.5h1M315 319.5h1M21 320.5h2M66 320.5h2M314 320.5h1M19 321.5h2M68 321.5h2M313 321.5h1M16 322.5h3M70 322.5h2M312 322.5h1M14 323.5h2M72 323.5h1M311 323.5h1M12 324.5h2M73 324.5h2M310 324.5h1M10 325.5h2M75 325.5h2M309 325.5h1M9 326.5h1M77 326.5h2M309 326.5h1M9 327.5h1M79 327.5h2M308 327.5h1M8 328.5h1M81 328.5h2M200 328.5h5M307 328.5h1M8 329.5h1M83 329.5h2M195 329.5h5M205 329.5h2M306 329.5h1M7 330.5h1M85 330.5h5M193 330.5h2M207 330.5h1M305 330.5h1M6 331.5h1M90 331.5h5M192 331.5h1M208 331.5h1M304 331.5h1M6 332.5h1M95 332.5h4M192 332.5h1M209 332.5h1M303 332.5h1M5 333.5h1M99 333.5h3M191 333.5h1M209 333.5h1M301 333.5h2M102 334.5h2M189 334.5h2M210 334.5h1M299 334.5h2M104 335.5h2M185 335.5h4M211 335.5h2M298 335.5h1M106 336.5h4M183 336.5h2M213 336.5h3M296 336.5h2M110 337.5h5M181 337.5h2M216 337.5h12M245 337.5h10M295 337.5h1M115 338.5h4M179 338.5h2M228 338.5h17M255 338.5h11M292 338.5h3M119 339.5h3M177 339.5h2M266 339.5h6M290 339.5h2M122 340.5h4M176 340.5h1M272 340.5h13M289 340.5h1M126 341.5h3M174 341.5h2M285 341.5h4M129 342.5h2M172 342.5h2M131 343.5h2M170 343.5h2M133 344.5h5M168 344.5h2M138 345.5h21M164 345.5h4M159 346.5h5" stroke="#FFFFFF" stroke-width="1" fill="none"/>
<path d="M615 128.5h5M610 129.5h5M620 129.5h4M605 130.5h5M624 130.5h4M600 131.5h5M628 131.5h3M594 132.5h6M631 132.5h1M591 133.5h3M632 133.5h1M589 134.5h2M633 134.5h1M587 135.5h2M634 135.5h1M585 136.5h2M634 136.5h1M583 137.5h2M635 137.5h1M581 138.5h2M636 138.5h1M579 139.5h2M637 139.5h1M578 140.5h1M638 140.5h1M577 141.5h1M639 141.5h1M576 142.5h1M640 142.5h1M575 143.5h1M641 143.5h1M574 144.5h1M641 144.5h1M573 145.5h1M642 145.5h1M572 146.5h1M643 146.5h1M571 147.5h1M644 147.5h2M571 148.5h1M646 148.5h3M455 149.5h4M570 149.5h1M649 149.5h2M451 150.5h4M459 150.5h2M570 150.5h1M651 150.5h3M447 151.5h4M461 151.5h2M569 151.5h1M654 151.5h4M443 152.5h4M463 152.5h1M569 152.5h1M658 152.5h6M441 153.5h2M464 153.5h1M568 153.5h1M664 153.5h20M440 154.5h1M465 154.5h1M567 154.5h1M684 154.5h6M439 155.5h1M466 155.5h1M567 155.5h1M690 155.5h8M437 156.5h2M467 156.5h1M566 156.5h1M698 156.5h14M436 157.5h1M468 157.5h1M566 157.5h1M712 157.5h15M435 158.5h1M468 158.5h1M565 158.5h1M727 158.5h12M434 159.5h1M469 159.5h1M563 159.5h2M739 159.5h2M433 160.5h1M470 160.5h1M562 160.5h1M741 160.5h2M432 161.5h1M470 161.5h1M561 161.5h1M743 161.5h2M431 162.5h1M471 162.5h1M559 162.5h2M745 162.5h1M430 163.5h1M472 163.5h1M558 163.5h1M746 163.5h2M429 164.5h1M472 164.5h1M556 164.5h2M748 164.5h2M429 165.5h1M473 165.5h1M554 165.5h2M750 165.5h2M428 166.5h1M474 166.5h2M552 166.5h2M752 166.5h2M427 167.5h1M476 167.5h2M550 167.5h2M754 167.5h1M426 168.5h1M478 168.5h3M547 168.5h3M755 168.5h1M425 169.5h1M481 169.5h4M545 169.5h2M756 169.5h2M424 170.5h1M485 170.5h4M543 170.5h2M758 170.5h1M423 171.5h1M489 171.5h5M541 171.5h2M759 171.5h1M423 172.5h1M494 172.5h4M537 172.5h4M760 172.5h1M422 173.5h1M498 173.5h2M533 173.5h4M761 173.5h1M421 174.5h1M500 174.5h2M527 174.5h6M762 174.5h1M421 175.5h1M502 175.5h2M522 175.5h5M763 175.5h1M420 176.5h1M504 176.5h5M516 176.5h6M764 176.5h1M419 177.5h1M509 177.5h7M765 177.5h1M418 178.5h1M766 178.5h1M418 179.5h1M767 179.5h1M417 180.5h1M768 180.5h1M416 181.5h1M769 181.5h1M416 182.5h1M770 182.5h1M415 183.5h1M771 183.5h1M414 184.5h1M771 184.5h1M414 185.5h1M772 185.5h1M413 186.5h1M773 186.5h1M413 187.5h1M774 187.5h1M412 188.5h1M775 188.5h1M412 189.5h1M776 189.5h1M411 190.5h1M777 190.5h1M411 191.5h1M778 191.5h1M410 192.5h1M779 192.5h1M410 193.5h1M780 193.5h1M409 194.5h1M781 194.5h1M409 195.5h1M782 195.5h1M408 196.5h1M783 196.5h1M408 197.5h1M784 197.5h1M407 198.5h1M785 198.5h1M407 199.5h1M786 199.5h1M406 200.5h1M787 200.5h1M406 201.5h1M788 201.5h1M405 202.5h1M789 202.5h1M405 203.5h1M790 203.5h1M404 204.5h1M791 204.5h1M404 205.5h1M792 205.5h2M403 206.5h1M794 206.5h1M403 207.5h1M795 207.5h1M403 208.5h1M796 208.5h1M402 209.5h1M797 209.5h1M402 210.5h1M798 210.5h1M402 211.5h1M799 211.5h1M401 212.5h1M800 212.5h1M401 213.5h1M801 213.5h2M400 214.5h1M803 214.5h1M400 215.5h1M804 215.5h1M400 216.5h1M805 216.5h1M399 217.5h1M806 217.5h1M399 218.5h1M807 218.5h2M399 219.5h1M809 219.5h1M398 220.5h1M810 220.5h1M398 221.5h1M811 221.5h2M398 222.5h1M813 222.5h1M397 223.5h1M814 223.5h2M397 224.5h1M816 224.5h2M396 225.5h1M818 225.5h1M396 226.5h1M819 226.5h2M396 227.5h1M821 227.5h2M395 228.5h1M823 228.5h3M395 229.5h1M826 229.5h3M395 230.5h1M829 230.5h4M394 231.5h1M833 231.5h5M394 232.5h1M838 232.5h3M394 233.5h1M841 233.5h2M393 234.5h1M843 234.5h1M393 235.5h1M844 235.5h1M392 236.5h1M845 236.5h2M392 237.5h1M847 237.5h1M392 238.5h1M848 238.5h2M391 239.5h1M850 239.5h1M391 240.5h1M851 240.5h2M390 241.5h1M853 241.5h2M390 242.5h1M855 242.5h2M389 243.5h1M857 243.5h4M389 244.5h1M861 244.5h4M389 245.5h1M865 245.5h5M388 246.5h1M870 246.5h5M388 247.5h1M875 247.5h4M387 248.5h1M879 248.5h15M387 249.5h1M894 249.5h2M386 250.5h1M896 250.5h3M386 251.5h1M899 251.5h3M385 252.5h1M902 252.5h2M384 253.5h1M904 253.5h3M383 254.5h1M907 254.5h3M383 255.5h1M910 255.5h2M382 256.5h1M912 256.5h4M381 257.5h1M916 257.5h4M381 258.5h1M920 258.5h5M380 259.5h1M925 259.5h19M380 260.5h1M944 260.5h4M379 261.5h1M948 261.5h3M378 262.5h1M951 262.5h4M378 263.5h1M955 263.5h4M377 264.5h1M959 264.5h6M377 265.5h1M965 265.5h9M376 266.5h1M974 266.5h12M375 267.5h1M986 267.5h9M375 268.5h1M995 268.5h5M374 269.5h1M1000 269.5h5M373 270.5h1M1005 270.5h5M373 271.5h1M1010 271.5h4M372 272.5h1M1014 272.5h4M372 273.5h1M1018 273.5h4M371 274.5h1M1022 274.5h4M370 275.5h1M1026 275.5h5M369 276.5h1M1031 276.5h4M368 277.5h1M1035 277.5h2M367 278.5h1M1037 278.5h3M366 279.5h1M1040 279.5h3M365 280.5h1M1043 280.5h3M364 281.5h1M1046 281.5h3M363 282.5h1M1049 282.5h3M362 283.5h1M1052 283.5h3M361 284.5h1M1055 284.5h4M360 285.5h1M1059 285.5h4M359 286.5h1M1063 286.5h4M358 287.5h1M1067 287.5h4M357 288.5h1M1071 288.5h3M356 289.5h1M356 290.5h1M355 291.5h1M355 292.5h1M354 293.5h1M354 294.5h1M353 295.5h1M352 296.5h1M352 297.5h1M351 298.5h1M351 299.5h1M350 300.5h1M349 301.5h1M348 302.5h1M347 303.5h1M346 304.5h1M345 305.5h1M345 306.5h1M344 307.5h1M343 308.5h1M342 309.5h1M341 310.5h1M340 311.5h1M339 312.5h1M338 313.5h1M336 314.5h2M62 315.5h7M335 315.5h1M55 316.5h7M69 316.5h5M334 316.5h1M48 317.5h7M74 317.5h2M333 317.5h1M43 318.5h5M76 318.5h2M332 318.5h1M39 319.5h4M78 319.5h3M330 319.5h2M37 320.5h2M81 320.5h4M329 320.5h1M36 321.5h1M85 321.5h3M328 321.5h1M34 322.5h2M88 322.5h2M327 322.5h1M33 323.5h1M90 323.5h2M325 323.5h2M32 324.5h1M92 324.5h3M324 324.5h1M31 325.5h1M95 325.5h2M322 325.5h2M30 326.5h1M97 326.5h2M321 326.5h1M29 327.5h1M99 327.5h3M320 327.5h1M28 328.5h1M102 328.5h2M318 328.5h2M27 329.5h1M104 329.5h2M317 329.5h1M26 330.5h1M106 330.5h2M315 330.5h2M25 331.5h1M108 331.5h2M313 331.5h2M24 332.5h1M110 332.5h2M311 332.5h2M23 333.5h1M112 333.5h3M235 333.5h6M309 333.5h2M22 334.5h1M115 334.5h4M224 334.5h11M241 334.5h1M307 334.5h2M20 335.5h2M119 335.5h3M219 335.5h5M242 335.5h1M304 335.5h3M19 336.5h1M122 336.5h2M215 336.5h4M243 336.5h8M302 336.5h2M18 337.5h1M124 337.5h2M206 337.5h9M251 337.5h15M297 337.5h5M17 338.5h1M126 338.5h3M193 338.5h13M266 338.5h18M291 338.5h6M15 339.5h2M129 339.5h4M191 339.5h2M284 339.5h7M14 340.5h1M133 340.5h5M182 340.5h9M13 341.5h1M138 341.5h7M178 341.5h4M11 342.5h2M145 342.5h7M175 342.5h3M9 343.5h2M152 343.5h5M173 343.5h2M7 344.5h2M157 344.5h4M171 344.5h2M5 345.5h2M161 345.5h10M3 346.5h2" stroke="#FFFF00" stroke-width="1" fill="none"/>
<path d="M678 141.5h9M670 142.5h8M687 142.5h7M659 143.5h11M694 143.5h2M648 144.5h11M696 144.5h3M640 145.5h8M699 145.5h3M633 146.5h7M702 146.5h3M625 147.5h8M705 147.5h2M618 148.5h7M707 148.5h3M610 149.5h8M710 149.5h3M605 150.5h5M713 150.5h3M601 151.5h4M716 151.5h3M597 152.5h4M719 152.5h3M593 153.5h4M722 153.5h3M590 154.5h3M725 154.5h4M587 155.5h3M729 155.5h4M584 156.5h3M733 156.5h3M581 157.5h3M736 157.5h4M578 158.5h3M740 158.5h4M575 159.5h3M744 159.5h3M573 160.5h2M747 160.5h4M571 161.5h2M751 161.5h4M525 162.5h5M569 162.5h2M755 162.5h2M519 163.5h6M530 163.5h4M567 163.5h2M757 163.5h2M515 164.5h4M534 164.5h3M564 164.5h3M759 164.5h2M511 165.5h4M537 165.5h2M562 165.5h2M761 165.5h2M507 166.5h4M539 166.5h2M560 166.5h2M763 166.5h2M504 167.5h3M541 167.5h4M558 167.5h2M765 167.5h2M502 168.5h2M545 168.5h13M767 168.5h2M500 169.5h2M769 169.5h3M498 170.5h2M772 170.5h2M496 171.5h2M774 171.5h2M493 172.5h3M776 172.5h2M491 173.5h2M778 173.5h2M489 174.5h2M780 174.5h2M487 175.5h2M782 175.5h2M485 176.5h2M784 176.5h2M483 177.5h2M786 177.5h2M482 178.5h1M788 178.5h2M480 179.5h2M790 179.5h2M479 180.5h1M792 180.5h2M478 181.5h1M794 181.5h2M476 182.5h2M796 182.5h2M475 183.5h1M798 183.5h2M474 184.5h1M800 184.5h2M472 185.5h2M802 185.5h2M471 186.5h1M804 186.5h2M470 187.5h1M806 187.5h1M468 188.5h2M807 188.5h2M467 189.5h1M809 189.5h2M466 190.5h1M811 190.5h1M465 191.5h1M812 191.5h2M464 192.5h1M814 192.5h2M462 193.5h2M816 193.5h1M461 194.5h1M817 194.5h2M460 195.5h1M819 195.5h2M459 196.5h1M821 196.5h1M458 197.5h1M822 197.5h2M457 198.5h1M824 198.5h2M456 199.5h1M826 199.5h1M454 200.5h2M827 200.5h2M453 201.5h1M829 201.5h2M452 202.5h1M831 202.5h2M451 203.5h1M833 203.5h1M450 204.5h1M834 204.5h2M449 205.5h1M836 205.5h2M448 206.5h1M838 206.5h1M446 207.5h2M839 207.5h1M445 208.5h1M840 208.5h2M444 209.5h1M842 209.5h1M443 210.5h1M843 210.5h1M442 211.5h1M844 211.5h2M440 212.5h2M846 212.5h1M439 213.5h1M847 213.5h1M438 214.5h1M848 214.5h2M437 215.5h1M850 215.5h1M436 216.5h1M851 216.5h1M435 217.5h1M852 217.5h1M435 218.5h1M853 218.5h2M434 219.5h1M855 219.5h1M433 220.5h1M856 220.5h1M432 221.5h1M857 221.5h1M432 222.5h1M858 222.5h1M431 223.5h1M859 223.5h2M430 224.5h1M861 224.5h1M429 225.5h1M862 225.5h1M428 226.5h1M863 226.5h2M428 227.5h1M865 227.5h2M427 228.5h1M867 228.5h1M426 229.5h1M868 229.5h2M425 230.5h1M870 230.5h2M425 231.5h1M872 231.5h2M424 232.5h1M874 232.5h2M423 233.5h1M876 233.5h3M422 234.5h1M879 234.5h2M422 235.5h1M881 235.5h3M421 236.5h1M884 236.5h3M420 237.5h1M887 237.5h3M419 238.5h1M890 238.5h2M419 239.5h1M892 239.5h3M418 240.5h1M895 240.5h4M417 241.5h1M899 241.5h4M416 242.5h1M903 242.5h5M416 243.5h1M908 243.5h4M415 244.5h1M912 244.5h2M414 245.5h1M914 245.5h3M414 246.5h1M917 246.5h2M413 247.5h1M919 247.5h2M412 248.5h1M921 248.5h2M412 249.5h1M923 249.5h2M411 250.5h1M925 250.5h2M410 251.5h1M927 251.5h2M410 252.5h1M929 252.5h7M409 253.5h1M936 253.5h9M408 254.5h1M945 254.5h4M408 255.5h1M949 255.5h5M407 256.5h1M954 256.5h5M406 257.5h1M959 257.5h6M406 258.5h1M965 258.5h6M405 259.5h1M971 259.5h6M404 260.5h1M977 260.5h6M404 261.5h1M983 261.5h6M403 262.5h1M989 262.5h7M402 263.5h1M996 263.5h7M402 264.5h1M1003 264.5h5M401 265.5h1M1008 265.5h3M401 266.5h1M1011 266.5h4M400 267.5h1M1015 267.5h3M400 268.5h1M1018 268.5h4M399 269.5h1M1022 269.5h4M398 270.5h1M1026 270.5h5M398 271.5h1M1031 271.5h4M397 272.5h1M1035 272.5h4M397 273.5h1M1039 273.5h4M396 274.5h1M1043 274.5h9M396 275.5h1M1052 275.5h10M395 276.5h1M1062 276.5h4M394 277.5h1M1066 277.5h5M394 278.5h1M1071 278.5h3M393 279.5h1M393 280.5h1M392 281.5h1M392 282.5h1M391 283.5h1M390 284.5h1M389 285.5h1M388 286.5h1M387 287.5h1M386 288.5h1M385 289.5h1M384 290.5h1M383 291.5h1M382 292.5h1M381 293.5h1M380 294.5h1M379 295.5h1M378 296.5h1M377 297.5h1M376 298.5h1M375 299.5h1M374 300.5h1M373 301.5h1M372 302.5h1M371 303.5h1M370 304.5h1M369 305.5h1M368 306.5h1M367 307.5h1M366 308.5h1M365 309.5h1M363 310.5h2M361 311.5h2M359 312.5h2M358 313.5h1M356 314.5h2M354 315.5h2M353 316.5h1M351 317.5h2M349 318.5h2M347 319.5h2M345 320.5h2M343 321.5h2M341 322.5h2M338 323.5h3M336 324.5h2M107 325.5h10M333 325.5h3M97 326.5h10M117 326.5h7M331 326.5h2M90 327.5h7M124 327.5h7M329 327.5h2M84 328.5h6M131 328.5h7M326 328.5h3M79 329.5h5M138 329.5h5M323 329.5h3M75 330.5h4M143 330.5h4M320 330.5h3M70 331.5h5M147 331.5h3M317 331.5h3M65 332.5h5M150 332.5h4M314 332.5h3M61 333.5h4M154 333.5h5M311 333.5h3M57 334.5h4M159 334.5h7M301 334.5h10M54 335.5h3M166 335.5h10M297 335.5h4M51 336.5h3M176 336.5h11M295 336.5h2M49 337.5h2M187 337.5h14M279 337.5h16M46 338.5h3M201 338.5h4M257 338.5h22M43 339.5h3M205 339.5h52M41 340.5h2M39 341.5h2M37 342.5h2M35 343.5h2M33 344.5h2M30 345.5h3M28 346.5h2M26 347.5h2M24 348.5h2M22 349.5h2M20 350.5h2M18 351.5h2M17 352.5h1M15 353.5h2M14 354.5h1M12 355.5h2M11 356.5h1M10 357.5h1M8 358.5h2M7 359.5h1M5 360.5h2M4 361.5h1" stroke="#FF00FF" stroke-width="1" fill="none"/>
<path d="M766 162.5h31M763 163.5h3M797 163.5h6M756 164.5h7M803 164.5h6M746 165.5h10M809 165.5h5M739 166.5h7M814 166.5h2M735 167.5h4M816 167.5h3M732 168.5h3M819 168.5h2M729 169.5h3M821 169.5h4M727 170.5h2M825 170.5h4M724 171.5h3M829 171.5h5M722 172.5h2M834 172.5h5M719 173.5h3M839 173.5h4M716 174.5h3M843 174.5h5M714 175.5h2M848 175.5h5M711 176.5h3M853 176.5h4M708 177.5h3M857 177.5h5M706 178.5h2M862 178.5h5M704 179.5h2M867 179.5h6M702 180.5h2M873 180.5h7M700 181.5h2M880 181.5h7M698 182.5h2M887 182.5h6M696 183.5h2M893 183.5h5M694 184.5h2M898 184.5h5M692 185.5h2M903 185.5h6M690 186.5h2M909 186.5h5M688 187.5h2M914 187.5h5M685 188.5h3M919 188.5h4M683 189.5h2M923 189.5h4M681 190.5h2M927 190.5h5M678 191.5h3M932 191.5h4M676 192.5h2M936 192.5h4M673 193.5h3M940 193.5h5M671 194.5h2M945 194.5h4M669 195.5h2M949 195.5h4M666 196.5h3M953 196.5h4M664 197.5h2M957 197.5h4M661 198.5h3M961 198.5h4M659 199.5h2M965 199.5h4M656 200.5h3M969 200.5h3M654 201.5h2M972 201.5h4M651 202.5h3M976 202.5h4M648 203.5h3M980 203.5h2M646 204.5h2M982 204.5h2M643 205.5h3M984 205.5h2M641 206.5h2M986 206.5h1M638 207.5h3M987 207.5h2M636 208.5h2M989 208.5h1M633 209.5h3M990 209.5h2M631 210.5h2M992 210.5h2M629 211.5h2M994 211.5h2M627 212.5h2M996 212.5h3M625 213.5h2M999 213.5h3M623 214.5h2M1002 214.5h3M620 215.5h3M1005 215.5h3M618 216.5h2M1008 216.5h3M616 217.5h2M1011 217.5h4M614 218.5h2M1015 218.5h3M612 219.5h2M1018 219.5h4M610 220.5h2M1022 220.5h3M608 221.5h2M1025 221.5h4M606 222.5h2M1029 222.5h3M604 223.5h2M1032 223.5h2M603 224.5h1M1034 224.5h3M601 225.5h2M1037 225.5h3M599 226.5h2M1040 226.5h2M596 227.5h3M1042 227.5h3M594 228.5h2M1045 228.5h3M591 229.5h3M1048 229.5h3M588 230.5h3M1051 230.5h3M586 231.5h2M1054 231.5h4M584 232.5h2M1058 232.5h3M582 233.5h2M1061 233.5h3M580 234.5h2M1064 234.5h3M578 235.5h2M1067 235.5h2M576 236.5h2M1069 236.5h3M574 237.5h2M1072 237.5h2M573 238.5h1M572 239.5h1M570 240.5h2M569 241.5h1M568 242.5h1M566 243.5h2M565 244.5h1M563 245.5h2M561 246.5h2M559 247.5h2M556 248.5h3M554 249.5h2M552 250.5h2M550 251.5h2M548 252.5h2M546 253.5h2M545 254.5h1M543 255.5h2M542 256.5h1M540 257.5h2M538 258.5h2M536 259.5h2M534 260.5h2M531 261.5h3M529 262.5h2M526 263.5h3M524 264.5h2M521 265.5h3M519 266.5h2M516 267.5h3M514 268.5h2M511 269.5h3M508 270.5h3M505 271.5h3M502 272.5h3M499 273.5h3M496 274.5h3M493 275.5h3M491 276.5h2M488 277.5h3M485 278.5h3M483 279.5h2M480 280.5h3M478 281.5h2M475 282.5h3M473 283.5h2M470 284.5h3M468 285.5h2M465 286.5h3M462 287.5h3M458 288.5h4M455 289.5h3M452 290.5h3M449 291.5h3M446 292.5h3M443 293.5h3M440 294.5h3M437 295.5h3M434 296.5h3M431 297.5h3M428 298.5h3M425 299.5h3M422 300.5h3M418 301.5h4M414 302.5h4M412 303.5h2M410 304.5h2M409 305.5h1M407 306.5h2M405 307.5h2M404 308.5h1M402 309.5h2M401 310.5h1M399 311.5h2M397 312.5h2M396 313.5h1M394 314.5h2M392 315.5h2M389 316.5h3M387 317.5h2M384 318.5h3M381 319.5h3M379 320.5h2M376 321.5h3M373 322.5h3M369 323.5h4M366 324.5h3M362 325.5h4M359 326.5h3M355 327.5h4M352 328.5h3M348 329.5h4M344 330.5h4M339 331.5h5M335 332.5h4M330 333.5h5M326 334.5h4M322 335.5h4M318 336.5h4M315 337.5h3M311 338.5h4M301 339.5h10M297 340.5h4M289 341.5h8M277 342.5h12M267 343.5h10M260 344.5h7M254 345.5h6M249 346.5h5M245 347.5h4M239 348.5h6M231 349.5h8M225 350.5h6M220 351.5h5M216 352.5h4M211 353.5h5M206 354.5h5M202 355.5h4M197 356.5h5M193 357.5h4M188 358.5h5M184 359.5h4M180 360.5h4M178 361.5h2" stroke="#00E600" stroke-width="1" fill="none"/>
<clipPath id="cp"><rect x="1" y="394" width="1097" height="190"/></clipPath>
<polyline points="1.0,410.1 3.5,410.1 10.4,408.0 17.3,402.9 24.2,401.7 31.1,400.1 38.0,401.0 44.9,404.9 51.8,411.0 58.7,414.5 65.6,418.0 72.5,424.0 79.4,429.7 86.3,435.1 93.2,436.9 100.1,438.4 107.0,441.0 113.9,443.9 120.9,447.0 127.8,450.5 134.7,454.7 141.6,458.8 148.5,460.0 155.4,461.5 162.3,464.6 169.2,464.9 176.1,455.4 183.0,447.8 189.9,445.9 196.8,445.2 203.7,449.8 210.6,454.4 217.5,458.1 224.4,459.6 231.3,460.2 238.2,462.5 245.2,465.2 252.1,468.2 259.0,471.7 265.9,475.6 272.8,479.9 279.7,484.7 286.6,489.9 293.5,484.7 300.4,475.2 307.3,464.7 314.2,452.9 321.1,438.0 328.0,424.3 334.9,413.7 341.8,406.7 348.7,407.5 355.6,403.6 362.5,401.7 369.5,401.9 376.4,400.8 383.3,400.5 390.2,400.1 397.1,396.7 404.0,393.9 410.9,401.0 417.8,414.5 424.7,425.7 431.6,433.6 438.5,441.3 445.4,448.6 452.3,455.1 459.2,458.1 466.1,460.9 473.0,463.7 479.9,463.8 486.8,463.5 493.8,462.6 500.7,461.4 507.6,461.3 514.5,461.5 521.4,461.0 528.3,458.9 535.2,456.9 542.1,455.0 549.0,452.3 555.9,447.4 562.8,439.7 569.7,429.2 576.6,418.6 583.5,418.9 590.4,424.3 597.3,430.1 604.2,436.3 611.1,440.7 618.0,444.7 625.0,448.6 631.9,450.1 638.8,454.7 645.7,456.8 652.6,455.8 659.5,455.8 666.4,455.8 673.3,455.8 680.2,455.1 687.1,458.5 694.0,461.6 700.9,464.4 707.8,468.1 714.7,468.9 721.6,471.5 728.5,474.5 735.4,482.6 742.3,493.0 749.3,504.9 756.2,522.1 763.1,541.1 770.0,556.0 776.9,566.9 783.8,572.3 790.7,574.7 797.6,578.2 804.5,580.8 811.4,580.8 818.3,579.5 825.2,579.5 832.1,578.2 839.0,578.2 845.9,579.3 852.8,579.9 859.7,579.1 866.6,577.3 873.6,574.7 880.5,569.7 887.4,560.9 894.3,557.4 901.2,560.6 908.1,562.6 915.0,567.1 921.9,569.6 928.8,570.4 935.7,568.4 942.6,563.2 949.5,558.7 956.4,556.0 963.3,553.2 970.2,551.5 977.1,552.4 984.0,557.0 990.9,563.0 997.9,565.8 1004.8,568.2 1011.7,570.0 1018.6,569.1 1025.5,566.1 1032.4,566.1 1039.3,569.1 1046.2,572.1 1053.1,573.9 1060.0,574.9 1066.9,576.0 1073.8,576.9" fill="none" stroke="#FF0080" stroke-width="2" stroke-linejoin="round" clip-path="url(#cp)"/>
<rect x="1" y="410" width="7" height="2" fill="#FFFFFF" />
<rect x="6" y="408" width="9" height="4" fill="#FFFFFF" />
<rect x="13" y="403" width="9" height="9" fill="#FFFFFF" />
<rect x="20" y="402" width="9" height="10" fill="#FFFFFF" />
<rect x="27" y="400" width="9" height="12" fill="#FFFFFF" />
<rect x="33" y="401" width="9" height="11" fill="#FFFFFF" />
<rect x="40" y="405" width="9" height="7" fill="#FFFFFF" />
<rect x="47" y="411" width="9" height="1" fill="#FFFFFF" />
<rect x="337" y="407" width="9" height="5" fill="#FFFFFF" />
<rect x="344" y="408" width="9" height="4" fill="#FFFFFF" />
<rect x="351" y="404" width="9" height="8" fill="#FFFFFF" />
<rect x="358" y="402" width="9" height="10" fill="#FFFFFF" />
<rect x="365" y="402" width="9" height="10" fill="#FFFFFF" />
<rect x="372" y="401" width="9" height="11" fill="#FFFFFF" />
<rect x="379" y="400" width="9" height="12" fill="#FFFFFF" />
<rect x="386" y="400" width="9" height="12" fill="#FFFFFF" />
<rect x="393" y="397" width="9" height="15" fill="#FFFFFF" />
<rect x="399" y="394" width="9" height="18" fill="#FFFFFF" />
<rect x="406" y="401" width="9" height="11" fill="#FFFFFF" />
<rect x="772" y="560" width="9" height="7" fill="#FFFF00" />
<rect x="779" y="560" width="9" height="12" fill="#FFFF00" />
<rect x="786" y="560" width="9" height="15" fill="#FFFF00" />
<rect x="793" y="560" width="9" height="18" fill="#FFFF00" />
<rect x="800" y="560" width="9" height="21" fill="#FFFF00" />
<rect x="807" y="560" width="9" height="21" fill="#FFFF00" />
<rect x="814" y="560" width="9" height="20" fill="#FFFF00" />
<rect x="821" y="560" width="9" height="20" fill="#FFFF00" />
<rect x="828" y="560" width="9" height="18" fill="#FFFF00" />
<rect x="835" y="560" width="9" height="18" fill="#FFFF00" />
<rect x="841" y="560" width="9" height="19" fill="#FFFF00" />
<rect x="848" y="560" width="9" height="20" fill="#FFFF00" />
<rect x="855" y="560" width="9" height="19" fill="#FFFF00" />
<rect x="862" y="560" width="9" height="17" fill="#FFFF00" />
<rect x="869" y="560" width="9" height="15" fill="#FFFF00" />
<rect x="876" y="560" width="9" height="10" fill="#FFFF00" />
<rect x="883" y="560" width="9" height="1" fill="#FFFF00" />
<rect x="897" y="560" width="9" height="1" fill="#FFFF00" />
<rect x="904" y="560" width="9" height="3" fill="#FFFF00" />
<rect x="910" y="560" width="9" height="7" fill="#FFFF00" />
<rect x="917" y="560" width="9" height="10" fill="#FFFF00" />
<rect x="924" y="560" width="9" height="10" fill="#FFFF00" />
<rect x="931" y="560" width="9" height="8" fill="#FFFF00" />
<rect x="938" y="560" width="9" height="3" fill="#FFFF00" />
<rect x="986" y="560" width="9" height="3" fill="#FFFF00" />
<rect x="993" y="560" width="9" height="6" fill="#FFFF00" />
<rect x="1000" y="560" width="9" height="8" fill="#FFFF00" />
<rect x="1007" y="560" width="9" height="10" fill="#FFFF00" />
<rect x="1014" y="560" width="9" height="9" fill="#FFFF00" />
<rect x="1021" y="560" width="9" height="6" fill="#FFFF00" />
<rect x="1028" y="560" width="9" height="6" fill="#FFFF00" />
<rect x="1035" y="560" width="9" height="9" fill="#FFFF00" />
<rect x="1042" y="560" width="9" height="12" fill="#FFFF00" />
<rect x="1049" y="560" width="9" height="14" fill="#FFFF00" />
<rect x="1056" y="560" width="9" height="15" fill="#FFFF00" />
<rect x="1062" y="560" width="9" height="16" fill="#FFFF00" />
<rect x="1069" y="560" width="9" height="17" fill="#FFFF00" />
<rect x="1" y="412" width="1071" height="1" fill="#00FF00" />
<line x1="3" y1="486.5" x2="1072" y2="486.5" stroke="#FFFFFF" stroke-width="1" stroke-dasharray="1 6"/>
<rect x="1" y="559" width="1071" height="1" fill="#FF0000" />
<rect x="413" y="412" width="9" height="75" fill="#00FF00" />
<rect x="1100" y="391" width="5" height="1" fill="#B00000" />
<rect x="1100" y="410" width="2" height="1" fill="#B00000" />
<rect x="1100" y="429" width="5" height="1" fill="#B00000" />
<rect x="1100" y="448" width="2" height="1" fill="#B00000" />
<rect x="1100" y="467" width="5" height="1" fill="#B00000" />
<rect x="1100" y="486" width="2" height="1" fill="#B00000" />
<rect x="1100" y="505" width="5" height="1" fill="#B00000" />
<rect x="1100" y="524" width="2" height="1" fill="#B00000" />
<rect x="1100" y="543" width="5" height="1" fill="#B00000" />
<rect x="1100" y="562" width="2" height="1" fill="#B00000" />

<!-- right panel lines -->
<rect x="1150" y="85" width="118" height="1" fill="#B00000"/>
<rect x="1150" y="176" width="110" height="1" fill="#DC961E"/>
<rect x="1260" y="176" width="8" height="1" fill="#3282DC"/>
<rect x="1150" y="269" width="118" height="1" fill="#B00000"/>
<rect x="1150" y="366" width="118" height="1" fill="#B00000"/>
<rect x="1150" y="429" width="118" height="1" fill="#B00000"/>
<rect x="1150" y="449" width="118" height="1" fill="#B00000"/>
<rect x="1150" y="472" width="118" height="1" fill="#B00000"/>
<rect x="1244" y="456" width="24" height="7" fill="#00E600"/>
<!-- list icon -->
<rect x="1220" y="455" width="10" height="10" rx="2" fill="none" stroke="#808080" stroke-width="1" shape-rendering="auto"/>
<rect x="1222" y="457" width="6" height="1" fill="#909090"/><rect x="1222" y="459" width="6" height="1" fill="#909090"/><rect x="1222" y="461" width="6" height="1" fill="#909090"/><rect x="1222" y="463" width="6" height="1" fill="#909090"/>
<!-- toolbar icon -->
<g shape-rendering="auto">
<rect x="5.5" y="4.5" width="11" height="10" rx="2" fill="none" stroke="#909090" stroke-width="1.3"/>
<rect x="12" y="6.5" width="3" height="6" fill="#909090"/>
<rect x="1083.5" y="25.5" width="11" height="10" rx="2" fill="none" stroke="#909090" stroke-width="1.3"/>
<rect x="1090" y="27.5" width="3" height="6" fill="#909090"/>
<path d="M1070.5 25 L1076 30.5 L1070.5 36 L1065 30.5 Z" fill="none" stroke="#808080" stroke-width="1"/>
<circle cx="134" cy="29.7" r="6" fill="#808080"/>
<path d="M130.7 28.3 L134 31.6 L137.3 28.3" fill="none" stroke="#000" stroke-width="1.3"/>
<circle cx="8" cy="383.5" r="6" fill="#808080"/>
<path d="M4.7 382 L8 385.3 L11.3 382" fill="none" stroke="#000" stroke-width="1.3"/>
<path d="M611.5 5 L616.5 10 L611.5 15" fill="none" stroke="#C0C0C0" stroke-width="1"/>
<!-- arrows -->
<path d="M577.5 57.5 L588 62 M577.5 57.5 L581 57 M577.5 57.5 L579 61" fill="none" stroke="#C0C0C0" stroke-width="1"/>
<path d="M142 356.5 L153.5 356.5 M142 356.5 L145 353.5 M142 356.5 L145 359.5" fill="none" stroke="#C0C0C0" stroke-width="1"/>
<!-- sell arrow -->
<rect x="417" y="497" width="2" height="7" fill="#00F000"/>
<path d="M412.8 503.2 L421.5 503.2 L419.8 509 L416.3 509 Z" fill="#00E800"/>
<path d="M413 503.6 L416.6 508.8" stroke="#003000" stroke-width="1" fill="none"/>
<polygon points="423.0,501.6 424.0,504.2 426.8,504.4 424.6,506.1 425.4,508.8 423.0,507.3 420.6,508.8 421.4,506.1 419.2,504.4 422.0,504.2" fill="#20FF40"/>
</g>

</svg>
<div id="txt">
<span class="t tb" style="top:4px;left:28px;">分时</span>
<span class="t tb" style="top:4px;left:62px;">1分钟</span>
<span class="t tb" style="top:4px;left:100px;">5分钟</span>
<span class="t tb" style="top:4px;left:139px;">15分钟</span>
<span class="t tb" style="top:4px;left:186px;">30分钟</span>
<span class="t tb" style="top:4px;left:232px;">60分钟</span>
<span class="t tb" style="top:4px;left:279px;color:#54FFFF;">日线</span>
<span class="t tb" style="top:4px;left:313px;">周线</span>
<span class="t tb" style="top:4px;left:346px;">月线</span>
<span class="t tb" style="top:4px;left:379px;">10分钟</span>
<span class="t tb" style="top:4px;left:426px;">45日线</span>
<span class="t tb" style="top:4px;left:472px;">季线</span>
<span class="t tb" style="top:4px;left:506px;">年线</span>
<span class="t tb" style="top:4px;left:539px;">多周期</span>
<span class="t tb" style="top:4px;left:583px;">更多</span>
<span class="t tb" style="top:4px;left:798px;">复权</span>
<span class="t tb" style="top:4px;left:832px;">叠加</span>
<span class="t tb" style="top:4px;left:866px;">多股</span>
<span class="t tb" style="top:4px;left:901px;">统计</span>
<span class="t tb" style="top:4px;left:936px;">画线</span>
<span class="t tb" style="top:4px;left:974px;">F10</span>
<span class="t tb" style="top:4px;left:1006px;">简框</span>
<span class="t tb" style="top:4px;left:1041px;">标记</span>
<span class="t tb" style="top:4px;left:1074px;">+自选</span>
<span class="t tb" style="top:4px;left:1116px;">返回</span>
<span class="t h" style="top:23px;left:3px;word-spacing:-2px">深深房<span class="sa">Ａ</span> (日线.前复权)</span>
<span class="t h" style="top:24px;left:144px;color:#fff;letter-spacing:-0.25px">MA5: 21.20</span>
<span class="t h" style="top:24px;left:210px;color:#FFFF00;letter-spacing:-0.25px">MA10: 21.73</span>
<span class="t h" style="top:24px;left:282px;color:#FF00FF;letter-spacing:-0.25px">MA20: 22.24</span>
<span class="t h" style="top:24px;left:354px;color:#00E600;letter-spacing:-0.25px">MA60: 24.42</span>
<span class="t h" style="top:38px;left:2px;">2026/01/20/二</span>
<span class="t h" style="top:38px;left:82px;color:#FF3232">开21.15</span>
<span class="t h" style="top:38px;left:127px;color:#FF3232">高21.35</span>
<span class="t h" style="top:38px;left:174px;color:#00E600">低20.95</span>
<span class="t h" style="top:38px;left:219px;color:#fff">收21.14</span>
<span class="t h" style="top:38px;left:265px;color:#C8C800">量31713</span>
<span class="t h" style="top:38px;left:315px;">额6697万</span>
<span class="t h" style="top:38px;left:370px;color:#fff">幅0.00(0.00%)</span>
<span class="t h" style="top:38px;left:453px;">换0.36%</span>
<span class="t h" style="top:38px;left:502px;">流通8.92亿</span>
<span class="t h" style="top:38px;left:565px;color:#D7D700">住宅开发</span>
<span class="t h" style="top:57px;left:591px;">34.00</span>
<span class="t h" style="top:352px;left:156px;">18.12</span>
<span class="t h" style="top:109px;left:1114px;color:#FF3232">30.95</span>
<span class="t h" style="top:162px;left:1114px;color:#FF3232">28.14</span>
<span class="t h" style="top:211px;left:1114px;color:#FF3232">25.58</span>
<span class="t h" style="top:254px;left:1114px;color:#FF3232">23.25</span>
<span class="t h" style="top:294px;left:1114px;color:#FF3232">21.14</span>
<span class="t h" style="top:334px;left:1114px;color:#FF3232">19.03</span>
<span class="t h" style="top:386px;left:1114px;color:#FF3232">100.0</span>
<span class="t h" style="top:424px;left:1114px;color:#FF3232">80.00</span>
<span class="t h" style="top:462px;left:1114px;color:#FF3232">60.00</span>
<span class="t h" style="top:500px;left:1114px;color:#FF3232">40.00</span>
<span class="t h" style="top:538px;left:1114px;color:#FF3232">20.00</span>
<span class="mk" style="left:396px;top:360px;background:#800000">涨</span>
<span class="mk" style="left:576px;top:360px;background:#008000">跌</span>
<span class="mk" style="left:631px;top:360px;background:#A05014">榜</span>
<span class="mk" style="left:659px;top:360px;background:#14326E">财</span>
<span class="mk" style="left:750px;top:360px;background:#008000">减</span>
<span class="t h" style="top:378px;left:18px;">底部反转</span>
<span class="t h" style="top:378px;left:71px;color:#FF0080">走势线: 2.32</span>
<span class="t h" style="top:378px;left:142px;color:#00E600">顶: 89.00</span>
<span class="t h" style="top:378px;left:196px;color:#FF0000">底: 11.00</span>
<span class="t h" style="top:378px;left:251px;color:#fff">中: 50.00</span>
<span class="t h" style="top:416px;left:341px;color:#fff">底部</span>
<span class="t h" style="top:499px;left:427px;color:#00FF00">卖</span>
<span class="t h" style="top:406px;left:1073px;color:#00FF00">顶</span>
<span class="t h" style="top:480px;left:1073px;color:#fff">中</span>
<span class="t h" style="top:553px;left:1073px;color:#FF0000">底</span>
<span class="t big" style="top:7px;left:1152px;color:#FFFF00">深深房<span class="sa2">Ａ</span></span>
<span class="t code" style="top:8px;left:1221px;">000029</span>
<span class="t price" style="top:33px;left:1153px;">21.14</span>
<span class="t chg" style="top:35px;left:1211px;">0.00</span>
<span class="t chg" style="top:35px;left:1247px;">0.00%</span>
<span class="btn" style="left:1156px;top:58px;border-color:#FF3232;color:#FF3232">买入</span>
<span class="btn" style="left:1213px;top:58px;border-color:#3282DC;color:#3282DC">卖出</span>
<span class="t big" style="top:87px;left:1152px;">卖五</span>
<span class="t val" style="top:88px;right:3px;color:#FF3232;letter-spacing:0.3px">21.23</span>
<span class="t big" style="top:105px;left:1152px;">卖四</span>
<span class="t val" style="top:106px;right:3px;color:#FF3232;letter-spacing:0.3px">21.20</span>
<span class="t big" style="top:123px;left:1152px;">卖三</span>
<span class="t val" style="top:124px;right:3px;color:#FF3232;letter-spacing:0.3px">21.19</span>
<span class="t big" style="top:141px;left:1152px;">卖二</span>
<span class="t val" style="top:142px;right:3px;color:#FF3232;letter-spacing:0.3px">21.17</span>
<span class="t big" style="top:159px;left:1152px;">卖一</span>
<span class="t val" style="top:160px;right:3px;color:#FF3232;letter-spacing:0.3px">21.16</span>
<span class="t big" style="top:179px;left:1152px;">买一</span>
<span class="t val" style="top:180px;right:3px;color:#fff;letter-spacing:0.3px">21.14</span>
<span class="t big" style="top:197px;left:1152px;">买二</span>
<span class="t val" style="top:198px;right:3px;color:#00E600;letter-spacing:0.3px">21.13</span>
<span class="t big" style="top:215px;left:1152px;">买三</span>
<span class="t val" style="top:216px;right:3px;color:#00E600;letter-spacing:0.3px">21.12</span>
<span class="t big" style="top:233px;left:1152px;">买四</span>
<span class="t val" style="top:234px;right:3px;color:#00E600;letter-spacing:0.3px">21.11</span>
<span class="t big" style="top:251px;left:1152px;">买五</span>
<span class="t val" style="top:252px;right:3px;color:#00E600;letter-spacing:0.3px">21.10</span>
<span class="t big" style="top:272px;left:1152px;">涨停</span>
<span class="t val" style="top:272px;right:3px;color:#FF3232;letter-spacing:0.3px">23.25</span>
<span class="t big" style="top:291px;left:1152px;">最高</span>
<span class="t val" style="top:292px;right:3px;color:#FF3232;letter-spacing:0.3px">21.35</span>
<span class="t big" style="top:311px;left:1152px;">最低</span>
<span class="t val" style="top:311px;right:3px;color:#00E600;letter-spacing:0.3px">20.95</span>
<span class="t big" style="top:330px;left:1152px;">现量</span>
<span class="t val" style="top:330px;right:3px;color:#00E600;letter-spacing:0.3px">1</span>
<span class="t big" style="top:348px;left:1152px;">外盘</span>
<span class="t val" style="top:349px;right:3px;color:#FF3232;letter-spacing:0.3px">14173</span>
<span class="t big" style="top:370px;left:1152px;">换手</span>
<span class="t val" style="top:370px;right:3px;color:#C0C0C0;letter-spacing:0.3px">0.36%</span>
<span class="t big" style="top:389px;left:1152px;">净资</span>
<span class="t val" style="top:389px;right:3px;color:#C0C0C0;letter-spacing:0.3px">3.62</span>
<span class="t big" style="top:407px;left:1152px;">收益㈢</span>
<span class="t val" style="top:408px;right:3px;color:#C0C0C0;letter-spacing:0.3px">0.140</span>
<span class="t big" style="top:432px;left:1152px;white-space:nowrap">交易状态: 盘中休</span>
<span class="t big" style="top:452px;left:1152px;">主力净额</span>
<span class="t val" style="top:476px;left:1152px;color:#C0C0C0">11:29</span>
<span class="t val" style="top:476px;right:5px;color:#FF3232">21.15</span>
<span class="t val" style="top:494px;right:5px;color:#FF3232">21.15</span>
<span class="t val" style="top:512px;right:5px;color:#fff">21.14</span>
<span class="t val" style="top:530px;right:5px;color:#fff">21.14</span>
<span class="t val" style="top:548px;right:5px;color:#00E600">21.13</span>
<span class="t val" style="top:566px;right:5px;color:#FF3232">21.15</span>
</div>
</body></html>
